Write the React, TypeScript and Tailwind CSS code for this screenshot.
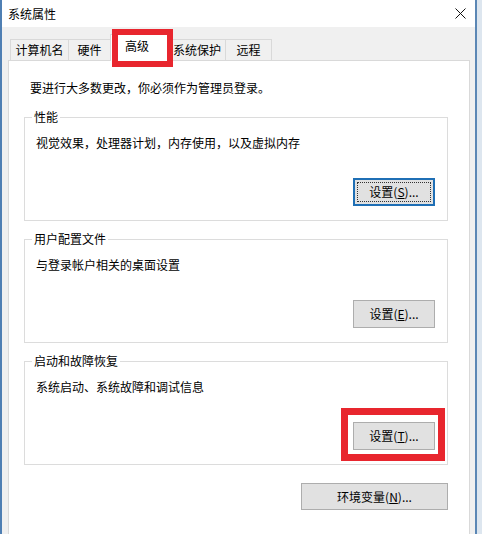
import React from "react";

const font = { fontFamily: '"Microsoft YaHei", "Noto Sans CJK SC", "Noto Sans", sans-serif' };

function Btn({ label, k, w = "w-[82px]", h = "h-[28px]", focused = false }: { label: string; k: string; w?: string; h?: string; focused?: boolean }) {
  return (
    <div
      className={`relative ${w} ${h} flex items-center justify-center bg-[#e1e1e1] text-[12px] leading-[16px] text-black ${
        focused ? "border-2 border-[#1f6fb5]" : "border border-[#adadad]"
      }`}
    >
      {focused && <div className="absolute inset-[2px] border border-dotted border-[#333]" />}
      <span>
        {label}(<span className="underline">{k}</span>)...
      </span>
    </div>
  );
}

function Group({ title, text, btn }: { title: string; text: string; btn: React.ReactNode }) {
  return (
    <div className="relative w-[424px] h-[104px] border border-[#dcdcdc] pt-[17px] pl-[11px] pr-[12px]">
      <span className="absolute -top-[9px] left-[7px] bg-white px-[2px] text-[12px] leading-[16px] text-black">{title}</span>
      <div className="text-[12px] leading-[16px] text-black">{text}</div>
      <div className="mt-[27px] flex justify-end">{btn}</div>
    </div>
  );
}

export default function App() {
  const tabs = [
    { t: "计算机名", w: "w-[58px]", cls: "justify-center" },
    { t: "硬件", w: "w-[42px]", cls: "justify-center" },
  ];
  return (
    <div className="relative w-[482px] h-[534px] flex overflow-hidden bg-white" style={font}>
      <div className="w-[2px] bg-[#4f7fb3]" />
      <div className="w-[473px] flex flex-col">
        <div className="h-[27px] bg-white flex items-center justify-between pl-[6px] pr-[9px]">
          <span className="text-[12px] leading-[16px] text-black">系统属性</span>
          <svg width="11" height="11" viewBox="0 0 11 11">
            <path d="M0.5 0.5 L10.5 10.5 M10.5 0.5 L0.5 10.5" stroke="#111" strokeWidth="1" fill="none" />
          </svg>
        </div>
        <div className="flex-1 bg-[#f0f0f0] pl-[6px] pr-[5px] flex flex-col">
          <div className="h-[33px] flex items-end pl-[2px]">
            {tabs.map((tb) => (
              <div
                key={tb.t}
                className={`${tb.w} h-[21px] flex items-center ${tb.cls} border border-b-0 border-r-0 border-[#d9d9d9] bg-[#f0f0f0] text-[12px] leading-[16px] text-black`}
              >
                {tb.t}
              </div>
            ))}
            <div className="w-[60px] h-[27px] -mb-[1px] z-10 flex items-center pl-[14px] pb-[4px] border border-b-0 border-[#d9d9d9] bg-white text-[12px] leading-[16px] text-black">
              高级
            </div>
            <div className="w-[55px] h-[21px] flex items-center pl-[3px] border-t border-[#d9d9d9] bg-[#f0f0f0] text-[12px] leading-[16px] text-black">
              系统保护
            </div>
            <div className="w-[47px] h-[21px] flex items-center justify-center border border-b-0 border-[#d9d9d9] bg-[#f0f0f0] text-[12px] leading-[16px] text-black">
              远程
            </div>
          </div>
          <div className="flex-1 bg-white border border-b-0 border-[#d9d9d9] pt-[19px] pl-[15px]">
            <div className="pl-[6px] text-[12px] leading-[16px] text-black">要进行大多数更改，你必须作为管理员登录。</div>
            <div className="mt-[21px] flex flex-col gap-[18px]">
              <Group title="性能" text="视觉效果，处理器计划，内存使用，以及虚拟内存" btn={<Btn label="设置" k="S" focused />} />
              <Group title="用户配置文件" text="与登录帐户相关的桌面设置" btn={<Btn label="设置" k="E" />} />
              <Group title="启动和故障恢复" text="系统启动、系统故障和调试信息" btn={<Btn label="设置" k="T" />} />
              <div className="w-[424px] flex justify-end">
                <Btn label="环境变量" k="N" w="w-[147px]" h="h-[27px]" />
              </div>
            </div>
          </div>
        </div>
      </div>
      <div className="w-[2px] bg-[#5b87b5]" />
      <div className="w-[5px] bg-[#dde6ef]" />

      <div className="absolute left-[112px] top-[29px] w-[61px] h-[38px] border-[6px] border-[#e8262e] pointer-events-none z-20" />
      <div className="absolute left-[341px] top-[408px] w-[104px] h-[53px] border-[7px] border-[#e8262e] pointer-events-none z-20" />
    </div>
  );
}
